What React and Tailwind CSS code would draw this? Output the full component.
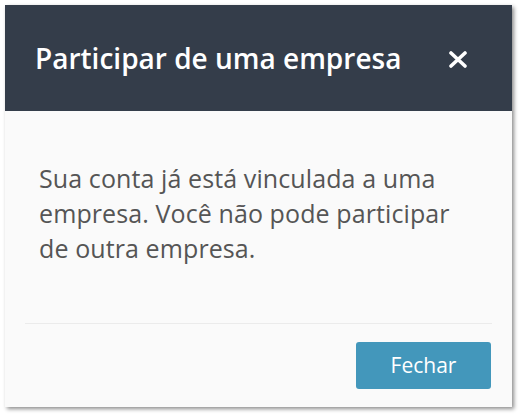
export default function App() {
  return (
    <div className="w-[521px] h-[416px] bg-white pl-[5px] pt-[5px]" style={{ fontFamily: '"Open Sans", "Noto Sans", sans-serif' }}>
      <div className="w-[507px] h-[402px] bg-[#fafafa] flex flex-col shadow-[2px_2px_4px_rgba(0,0,0,0.45)]">
        <div className="h-[106px] bg-[#343d4a] flex items-center justify-between pl-[30px] pr-[45px]">
          <h1 className="text-[28px] font-semibold text-white">Participar de uma empresa</h1>
          <svg width="18" height="17" viewBox="0 0 18 17" className="mt-[2px]">
            <path d="M2 2 L16 15 M16 2 L2 15" stroke="white" strokeWidth="3.6" strokeLinecap="round" />
          </svg>
        </div>
        <div className="flex-1 pl-[34px] pr-[40px] pt-[50px]">
          <p className="text-[25px] leading-[35px] tracking-[0.1px] text-[#555]">
            Sua conta já está vinculada a uma empresa. Você não pode participar de outra empresa.
          </p>
        </div>
        <div className="mx-[20px] border-t border-[#ebebeb]"></div>
        <div className="flex justify-end px-[21px] pt-[18px] pb-[18px]">
          <button className="w-[135px] h-[47px] rounded-[3px] bg-[#4397bb] text-white text-[21px]">Fechar</button>
        </div>
      </div>
    </div>
  );
}
